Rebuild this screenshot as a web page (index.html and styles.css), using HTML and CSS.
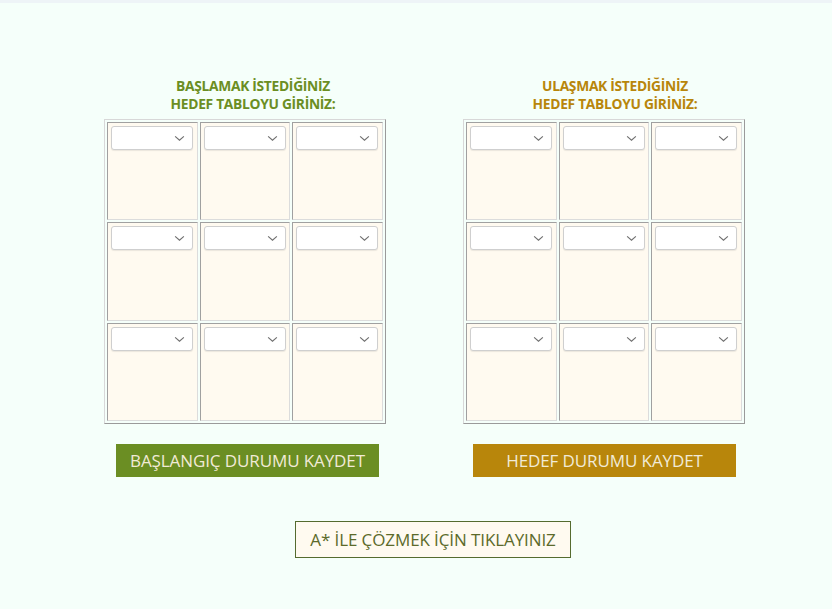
FILE: index.html
```html
<!DOCTYPE html>
<html lang="tr">
<head>
<meta charset="utf-8">
<title>8 Puzzle</title>
<link rel="stylesheet" href="styles.css">
</head>
<body>
<div class="topbar"></div>
<main class="page">
  <div class="boards">
    <section class="board start">
      <h2 class="title">BAŞLAMAK İSTEDİĞİNİZ<br>HEDEF TABLOYU GİRİNİZ:</h2>
      <table class="grid">
        <tr>
          <td><span class="sel"><select><option></option></select><svg viewBox="0 0 12 8"><path d="M1 1.5l5 4.5 5-4.5"/></svg></span></td>
          <td><span class="sel"><select><option></option></select><svg viewBox="0 0 12 8"><path d="M1 1.5l5 4.5 5-4.5"/></svg></span></td>
          <td><span class="sel"><select><option></option></select><svg viewBox="0 0 12 8"><path d="M1 1.5l5 4.5 5-4.5"/></svg></span></td>
        </tr>
        <tr>
          <td><span class="sel"><select><option></option></select><svg viewBox="0 0 12 8"><path d="M1 1.5l5 4.5 5-4.5"/></svg></span></td>
          <td><span class="sel"><select><option></option></select><svg viewBox="0 0 12 8"><path d="M1 1.5l5 4.5 5-4.5"/></svg></span></td>
          <td><span class="sel"><select><option></option></select><svg viewBox="0 0 12 8"><path d="M1 1.5l5 4.5 5-4.5"/></svg></span></td>
        </tr>
        <tr>
          <td><span class="sel"><select><option></option></select><svg viewBox="0 0 12 8"><path d="M1 1.5l5 4.5 5-4.5"/></svg></span></td>
          <td><span class="sel"><select><option></option></select><svg viewBox="0 0 12 8"><path d="M1 1.5l5 4.5 5-4.5"/></svg></span></td>
          <td><span class="sel"><select><option></option></select><svg viewBox="0 0 12 8"><path d="M1 1.5l5 4.5 5-4.5"/></svg></span></td>
        </tr>
      </table>
      <button class="save save-start">BAŞLANGIÇ DURUMU KAYDET</button>
    </section>
    <section class="board goal">
      <h2 class="title">ULAŞMAK İSTEDİĞİNİZ<br>HEDEF TABLOYU GİRİNİZ:</h2>
      <table class="grid">
        <tr>
          <td><span class="sel"><select><option></option></select><svg viewBox="0 0 12 8"><path d="M1 1.5l5 4.5 5-4.5"/></svg></span></td>
          <td><span class="sel"><select><option></option></select><svg viewBox="0 0 12 8"><path d="M1 1.5l5 4.5 5-4.5"/></svg></span></td>
          <td><span class="sel"><select><option></option></select><svg viewBox="0 0 12 8"><path d="M1 1.5l5 4.5 5-4.5"/></svg></span></td>
        </tr>
        <tr>
          <td><span class="sel"><select><option></option></select><svg viewBox="0 0 12 8"><path d="M1 1.5l5 4.5 5-4.5"/></svg></span></td>
          <td><span class="sel"><select><option></option></select><svg viewBox="0 0 12 8"><path d="M1 1.5l5 4.5 5-4.5"/></svg></span></td>
          <td><span class="sel"><select><option></option></select><svg viewBox="0 0 12 8"><path d="M1 1.5l5 4.5 5-4.5"/></svg></span></td>
        </tr>
        <tr>
          <td><span class="sel"><select><option></option></select><svg viewBox="0 0 12 8"><path d="M1 1.5l5 4.5 5-4.5"/></svg></span></td>
          <td><span class="sel"><select><option></option></select><svg viewBox="0 0 12 8"><path d="M1 1.5l5 4.5 5-4.5"/></svg></span></td>
          <td><span class="sel"><select><option></option></select><svg viewBox="0 0 12 8"><path d="M1 1.5l5 4.5 5-4.5"/></svg></span></td>
        </tr>
      </table>
      <button class="save save-goal">HEDEF DURUMU KAYDET</button>
    </section>
  </div>
  <div class="solve-row">
    <button class="solve">A* İLE ÇÖZMEK İÇİN TIKLAYINIZ</button>
  </div>
</main>
</body>
</html>
```

FILE: styles.css
```css
html, body {
  margin: 0;
  padding: 0;
  background: #f5fffa;
  font-family: "Open Sans", "Noto Sans", sans-serif;
}

.topbar {
  height: 3px;
  background: #eef4f7;
}

.page {
  padding-top: 74px;
  height: 532px;
  box-sizing: content-box;
}

.boards {
  display: flex;
  gap: 77px;
  padding-left: 104px;
}

.board {
  width: 282px;
  display: flex;
  flex-direction: column;
}

.title {
  margin: 0 0 6px 0;
  padding-left: 16px;
  text-align: center;
  font-size: 13.8px;
  font-weight: 700;
  line-height: 18px;
  letter-spacing: -0.3px;
  white-space: nowrap;
}

.start .title { color: #6b8e23; }
.goal .title { color: #b8860b; padding-left: 22px; }

.grid {
  border-collapse: separate;
  border-spacing: 2px;
  border: 1px solid;
  border-color: #d8d8d8 #9a9a9a #9a9a9a #d8d8d8;
  width: 282px;
  height: 305px;
  box-sizing: border-box;
}

.grid td {
  background: #fffaf0;
  border: 1px solid;
  border-color: #a0a0a0 #dcdcdc #dcdcdc #a0a0a0;
  padding: 3px 2px 3px 3px;
  vertical-align: top;
  width: 84px;
}

.sel {
  position: relative;
  display: block;
  width: 82px;
  height: 24px;
}

.sel select {
  appearance: none;
  -webkit-appearance: none;
  display: block;
  width: 82px;
  height: 24px;
  margin: 0;
  background: #ffffff;
  border: 1px solid #cfcfcf;
  border-radius: 3px;
  box-shadow: 0 1px 1px rgba(0,0,0,0.08);
  font-family: inherit;
}

.sel svg {
  position: absolute;
  right: 8px;
  top: 9px;
  width: 11px;
  height: 7px;
  fill: none;
  stroke: #6f6f6f;
  stroke-width: 1.3;
  pointer-events: none;
}

.save {
  margin: 20px 0 0 12px;
  width: 263px;
  height: 33px;
  border: none;
  font-family: inherit;
  font-size: 17px;
  color: #f1ead6;
  letter-spacing: -0.1px;
  padding: 0;
}

.save-start { background: #6b8e23; }
.save-goal { background: #b8860b; margin-left: 10px; }

.solve-row {
  padding: 44px 0 0 295px;
}

.solve {
  width: 276px;
  height: 37px;
  background: #fffaf0;
  border: 1px solid #556b2f;
  font-family: inherit;
  font-size: 17px;
  color: #5c6a2a;
  letter-spacing: -0.1px;
  padding: 0;
}
```
